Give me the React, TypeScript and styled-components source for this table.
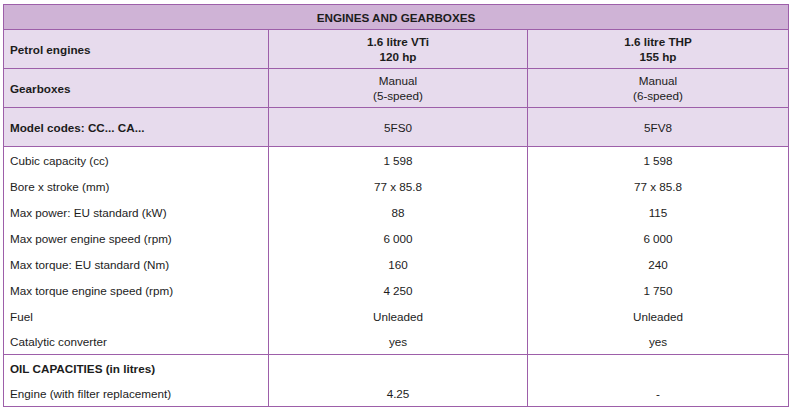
import React from "react";
import styled, { createGlobalStyle } from "styled-components";

const GlobalStyle = createGlobalStyle`
  body {
    margin: 0;
    background: #ffffff;
    font-family: "Liberation Sans", Arial, sans-serif;
  }
`;

const headRows = [
  { label: "Petrol engines", values: [["1.6 litre VTi", "120 hp"], ["1.6 litre THP", "155 hp"]], bold: true },
  { label: "Gearboxes", values: [["Manual", "(5-speed)"], ["Manual", "(6-speed)"]], bold: false },
  { label: "Model codes: CC... CA...", values: [["5FS0"], ["5FV8"]], bold: false },
];

const specRows = [
  ["Cubic capacity (cc)", "1 598", "1 598"],
  ["Bore x stroke (mm)", "77 x 85.8", "77 x 85.8"],
  ["Max power: EU standard (kW)", "88", "115"],
  ["Max power engine speed (rpm)", "6 000", "6 000"],
  ["Max torque: EU standard (Nm)", "160", "240"],
  ["Max torque engine speed (rpm)", "4 250", "1 750"],
  ["Fuel", "Unleaded", "Unleaded"],
  ["Catalytic converter", "yes", "yes"],
];

export default function App() {
  return (
    <Page>
      <GlobalStyle />
      <Table>
        <colgroup>
          <col style={{ width: 265 }} />
          <col style={{ width: 259 }} />
          <col style={{ width: 261 }} />
        </colgroup>
        <tbody>
          <tr>
            <Title colSpan={3}>ENGINES AND GEARBOXES</Title>
          </tr>
          {headRows.map((row) => (
            <tr key={row.label}>
              <LabelCell $shaded $bold $tall>
                {row.label}
              </LabelCell>
              {row.values.map((lines, i) => (
                <ValueCell key={i} $shaded $tall $bold={row.bold}>
                  {lines.map((line, j) => (
                    <React.Fragment key={j}>
                      {j > 0 && <br />}
                      {line}
                    </React.Fragment>
                  ))}
                </ValueCell>
              ))}
            </tr>
          ))}
          {specRows.map(([label, a, b], i) => (
            <tr key={label}>
              <LabelCell $closed={i === specRows.length - 1}>{label}</LabelCell>
              <ValueCell $closed={i === specRows.length - 1}>{a}</ValueCell>
              <ValueCell $closed={i === specRows.length - 1}>{b}</ValueCell>
            </tr>
          ))}
          <tr>
            <LabelCell $bold>OIL CAPACITIES (in litres)</LabelCell>
            <ValueCell />
            <ValueCell />
          </tr>
          <tr>
            <LabelCell $closed>Engine (with filter replacement)</LabelCell>
            <ValueCell $closed>4.25</ValueCell>
            <ValueCell $closed>-</ValueCell>
          </tr>
        </tbody>
      </Table>
    </Page>
  );
}

const Page = styled.div`
  padding: 4px 4px 0 3px;
`;

const Table = styled.table`
  width: 786px;
  table-layout: fixed;
  border-collapse: collapse;
  border: 1px solid #9d5fa9;
  color: #1c1c1c;
  font-size: 11.7px;
`;

const Title = styled.td`
  height: 24px;
  padding: 0;
  background: #cfb3d6;
  border-bottom: 1px solid #9d5fa9;
  text-align: center;
  font-weight: 700;
`;

const Cell = styled.td<{ $shaded?: boolean; $bold?: boolean; $tall?: boolean; $closed?: boolean }>`
  height: ${(p) => (p.$tall ? "38px" : p.$closed ? "25px" : "26px")};
  padding: 0;
  background: ${(p) => (p.$shaded ? "#e7dbed" : "#ffffff")};
  border-left: 1px solid #9d5fa9;
  border-right: 1px solid #9d5fa9;
  border-bottom: ${(p) => (p.$tall || p.$closed ? "1px solid #9d5fa9" : "none")};
  font-weight: ${(p) => (p.$bold ? 700 : 400)};
  line-height: 15px;
  vertical-align: middle;
`;

const LabelCell = styled(Cell)`
  padding-left: 6px;
  text-align: left;
`;

const ValueCell = styled(Cell)`
  text-align: center;
`;
